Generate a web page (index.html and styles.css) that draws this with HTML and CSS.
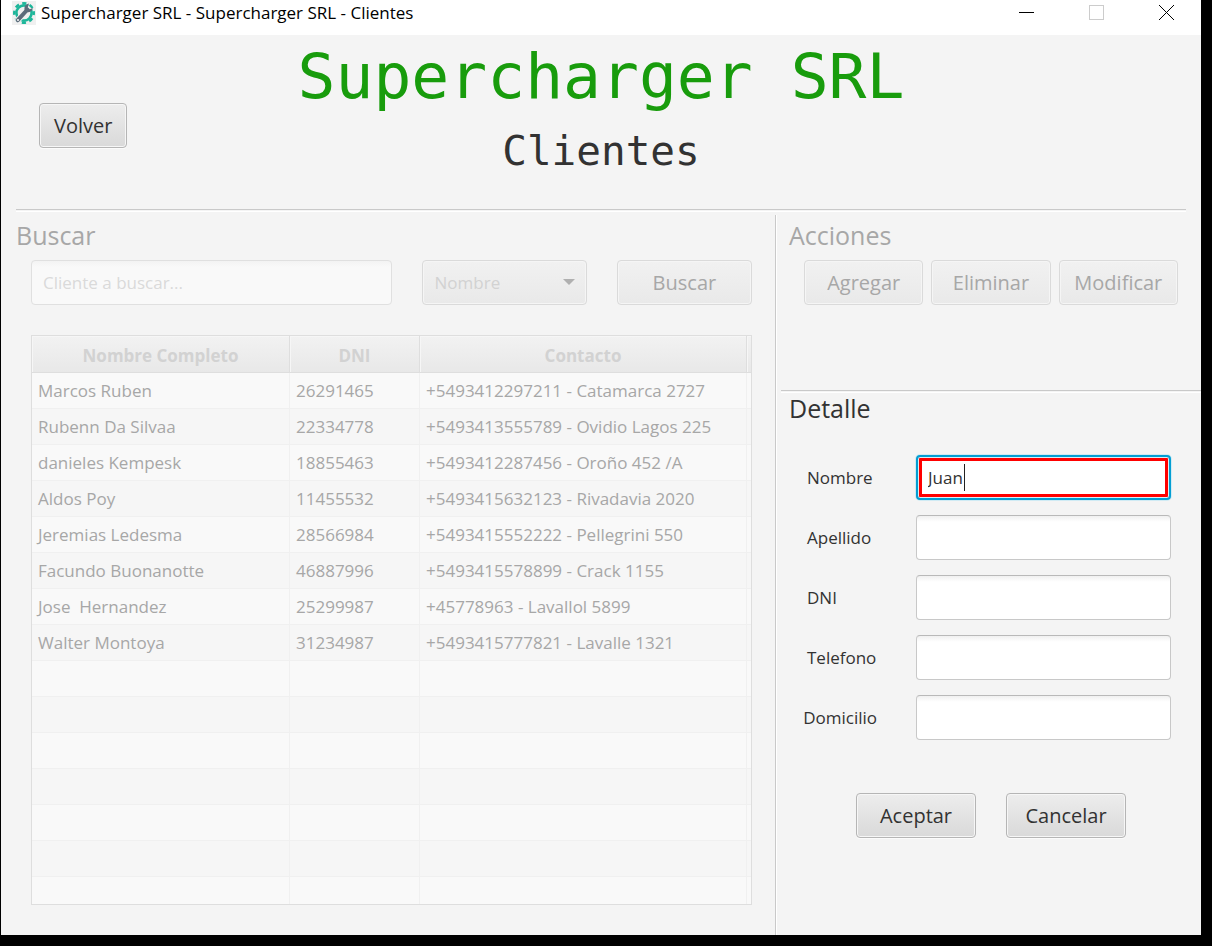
FILE: index.html
```html
<!DOCTYPE html>
<html lang="es">
<head>
<meta charset="utf-8">
<meta name="viewport" content="width=device-width, initial-scale=1">
<title>Supercharger SRL - Clientes</title>
<link rel="stylesheet" href="styles.css">
</head>
<body>
<div class="window">
  <div class="titlebar">
    <svg class="titlebar-icon" viewBox="0 0 24 24" aria-hidden="true">
      <rect width="24" height="24" fill="#f0f0f0"/>
      <circle cx="12" cy="12" r="7.6" fill="none" stroke="#1eb69a" stroke-width="2.6"/>
      <circle cx="12" cy="12" r="9.7" fill="none" stroke="#1eb69a" stroke-width="2.6" stroke-dasharray="4.2 3.418" stroke-dashoffset="2.1"/>
      <path d="M5 20 L18 6" stroke="#f0f0f0" stroke-width="6"/>
      <path d="M5.8 19.2 L15 9" stroke="#5c6b7a" stroke-width="4" stroke-linecap="round"/>
      <path d="M17 2.6 C12.8 3.2 11.6 7.2 13 9.8 C15 12.4 20 11.6 20.8 7 L17.8 8.2 L15.8 6.2 Z" fill="#5c6b7a"/>
      <circle cx="6" cy="19" r="1.1" fill="#f0f0f0"/>
    </svg>
    <span class="titlebar-text">Supercharger SRL - Supercharger SRL - Clientes</span>
    <div class="titlebar-controls">
      <button class="window-button" type="button" aria-label="Minimizar">
        <svg width="15" height="15" viewBox="0 0 15 15"><path d="M0 7.5H15" stroke="#000"/></svg>
      </button>
      <button class="window-button" type="button" aria-label="Maximizar" disabled>
        <svg width="15" height="15" viewBox="0 0 15 15"><rect x=".5" y=".5" width="14" height="14" fill="none" stroke="#ccc"/></svg>
      </button>
      <button class="window-button" type="button" aria-label="Cerrar">
        <svg width="15" height="15" viewBox="0 0 15 15"><path d="M0 0L15 15M15 0L0 15" stroke="#000"/></svg>
      </button>
    </div>
  </div>

  <header class="header">
    <div class="header-side"><button class="button" type="button">Volver</button></div>
    <div class="header-titles">
      <h1 class="brand">Supercharger SRL</h1>
      <p class="subtitle">Clientes</p>
    </div>
    <div class="header-side"></div>
  </header>
  <hr class="rule rule-header">

  <main class="content">
    <section class="search">
      <h2 class="heading heading-disabled">Buscar</h2>
      <div class="search-bar">
        <input class="text-input search-input" type="text" placeholder="Cliente a buscar..." aria-label="Cliente a buscar" disabled>
        <div class="combo">
          <select class="combo-select" aria-label="Buscar por" disabled><option>Nombre</option></select>
          <svg class="combo-arrow" width="12" height="7" viewBox="0 0 12 7" aria-hidden="true"><path d="M0 0H12L6 6Z" fill="#b0b0b0"/></svg>
        </div>
        <button class="button search-button" type="button" disabled>Buscar</button>
      </div>
      <div class="table-frame">
        <table class="table">
          <colgroup><col class="col-name"><col class="col-dni"><col><col class="col-filler"></colgroup>
          <thead><tr><th>Nombre Completo</th><th>DNI</th><th>Contacto</th><th></th></tr></thead>
          <tbody>
            <tr><td>Marcos Ruben</td><td>26291465</td><td>+5493412297211 - Catamarca 2727</td><td></td></tr>
            <tr><td>Rubenn Da Silvaa</td><td>22334778</td><td>+5493413555789 - Ovidio Lagos 225</td><td></td></tr>
            <tr><td>danieles Kempesk</td><td>18855463</td><td>+5493412287456 - Oroño 452 /A</td><td></td></tr>
            <tr><td>Aldos Poy</td><td>11455532</td><td>+5493415632123 - Rivadavia 2020</td><td></td></tr>
            <tr><td>Jeremias Ledesma</td><td>28566984</td><td>+5493415552222 - Pellegrini 550</td><td></td></tr>
            <tr><td>Facundo Buonanotte</td><td>46887996</td><td>+5493415578899 - Crack 1155</td><td></td></tr>
            <tr><td>Jose&nbsp; Hernandez</td><td>25299987</td><td>+45778963 - Lavallol 5899</td><td></td></tr>
            <tr><td>Walter Montoya</td><td>31234987</td><td>+5493415777821 - Lavalle 1321</td><td></td></tr>
            <tr><td></td><td></td><td></td><td></td></tr>
            <tr><td></td><td></td><td></td><td></td></tr>
            <tr><td></td><td></td><td></td><td></td></tr>
            <tr><td></td><td></td><td></td><td></td></tr>
            <tr><td></td><td></td><td></td><td></td></tr>
            <tr><td></td><td></td><td></td><td></td></tr>
            <tr><td></td><td></td><td></td><td></td></tr>
          </tbody>
        </table>
      </div>
    </section>

    <div class="side">
      <section class="actions">
        <h2 class="heading heading-disabled">Acciones</h2>
        <div class="actions-row">
          <button class="button" type="button" disabled>Agregar</button>
          <button class="button" type="button" disabled>Eliminar</button>
          <button class="button" type="button" disabled>Modificar</button>
        </div>
      </section>
      <hr class="rule rule-side">
      <section class="detail">
        <h2 class="heading">Detalle</h2>
        <form class="form">
          <div class="fields">
            <label class="label" for="nombre">Nombre</label>
            <div class="caret-field">
              <input class="text-input text-input-error" id="nombre" type="text" value="Juan">
              <span class="caret"></span>
            </div>
            <label class="label" for="apellido">Apellido</label>
            <input class="text-input" id="apellido" type="text">
            <label class="label" for="dni">DNI</label>
            <input class="text-input" id="dni" type="text">
            <label class="label" for="telefono">Telefono</label>
            <input class="text-input" id="telefono" type="text">
            <label class="label" for="domicilio">Domicilio</label>
            <input class="text-input" id="domicilio" type="text">
          </div>
          <div class="form-buttons">
            <button class="button form-button" type="button">Aceptar</button>
            <button class="button form-button" type="button">Cancelar</button>
          </div>
        </form>
      </section>
    </div>
  </main>
</div>
</body>
</html>
```
FILE: styles.css
```css
* {
  box-sizing: border-box;
}

body {
  margin: 0;
  height: 100vh;
  min-height: 860px;
  padding: 0 11px 11px 1px;
  background: #000;
  color: #323232;
  font: 17px/24px "Open Sans", "Noto Sans", sans-serif;
}

button,
input,
select {
  font: inherit;
  color: inherit;
}

.window {
  display: flex;
  flex-direction: column;
  height: 100%;
  background: #f4f4f4;
}

/* Title bar */
.titlebar {
  display: flex;
  align-items: center;
  height: 35px;
  padding: 0 0 10px 11px;
  background: #fff;
  color: #000;
}

.titlebar-icon {
  width: 24px;
  height: 24px;
  margin-right: 5px;
}

.titlebar-controls {
  display: flex;
  margin-left: auto;
}

.window-button {
  display: flex;
  align-items: center;
  justify-content: center;
  width: 70px;
  height: 25px;
  padding: 0;
  border: 0;
  background: none;
}

/* Header */
.header {
  display: grid;
  grid-template-columns: 1fr auto 1fr;
  padding: 4px 0 22px;
}

.header-side {
  padding: 64px 0 0 38px;
}

.header-titles {
  text-align: center;
  font-family: "DejaVu Sans Mono", monospace;
}

.brand {
  margin: 0;
  color: #189c0c;
  font-size: 63px;
  font-weight: 400;
  line-height: 76px;
}

.subtitle {
  margin: 0;
  font-size: 41px;
  line-height: 72px;
}

.rule {
  flex: none;
  height: 3px;
  margin: 0;
  border: 0;
  border-top: 1px solid #c9c9c9;
  border-bottom: 1px solid #fff;
}

.rule-header {
  margin: 0 15px;
}

/* Controls */
.button {
  height: 45px;
  padding: 0 14px;
  border: 1px solid #b5b5b5;
  border-radius: 4px;
  background: linear-gradient(#ededed, #d9d9d9);
  box-shadow: inset 0 0 0 1px #f6f6f6, 0 1px 0 #fbfbfb;
  font-size: 20px;
  line-height: 24px;
}

.button:disabled {
  border-color: #dadada;
  background: linear-gradient(#f1f1f1, #e9e9e9);
  box-shadow: inset 0 0 0 1px #f5f5f5;
  color: #a7a7a7;
}

.text-input {
  width: 100%;
  min-width: 0;
  height: 45px;
  padding: 0 11px;
  border: 1px solid #c8c8c8;
  border-top-color: #b9b9b9;
  border-radius: 4px;
  background: linear-gradient(#f0f0f0, #fff 6px);
}

.text-input:disabled {
  border-color: #e0e0e0;
  background: linear-gradient(#f3f3f3, #f9f9f9 6px);
}

.text-input::placeholder {
  color: #dadada;
  opacity: 1;
}

.text-input-error {
  padding: 0 10px;
  border: 2px solid #039ed3;
  background: #fff;
  box-shadow: 0 0 0 1px #d0ebf4, inset 0 0 0 1px #d9eef6, inset 0 0 0 4px #f00;
  outline: 0;
  caret-color: transparent;
}

.caret-field {
  position: relative;
}

.caret {
  position: absolute;
  top: 9px;
  left: 48px;
  width: 1px;
  height: 27px;
  background: #222;
}

/* Layout */
.content {
  display: grid;
  flex: 1;
  grid-template-columns: 129fr 71fr;
  min-height: 0;
  padding-top: 3px;
}

.heading {
  margin: 0;
  font-size: 25px;
  font-weight: 400;
  line-height: 34px;
}

.heading-disabled {
  color: #a7a7a7;
}

/* Search */
.search {
  display: flex;
  flex-direction: column;
  min-height: 0;
  padding: 3px 23px 30px 15px;
}

.search-bar {
  display: grid;
  grid-template-columns: 72fr 33fr 27fr;
  gap: 30px;
  margin: 8px 0 30px 15px;
}

.combo {
  position: relative;
}

.combo-select {
  width: 100%;
  height: 45px;
  padding: 0 12px;
  appearance: none;
  border: 1px solid #dadada;
  border-radius: 4px;
  background: linear-gradient(#f1f1f1, #e9e9e9);
  box-shadow: inset 0 0 0 1px #f5f5f5;
  color: #d2d2d2;
  opacity: 1;
}

.combo-arrow {
  position: absolute;
  top: 19px;
  right: 12px;
}

.table-frame {
  flex: 1;
  min-height: 0;
  margin-left: 15px;
  overflow: hidden;
  border: 1px solid #dedede;
}

.table {
  width: 100%;
  table-layout: fixed;
  border-collapse: separate;
  border-spacing: 0;
  color: #a7a7a7;
}

.col-name {
  width: 258px;
}

.col-dni {
  width: 130px;
}

.col-filler {
  width: 4px;
}

.table th {
  height: 37px;
  padding: 3px 0 0;
  border-right: 1px solid #dedede;
  border-bottom: 1px solid #dedede;
  background: linear-gradient(#f2f2f2, #e8e8e8);
  box-shadow: inset 1px 1px 0 #f6f6f6;
  color: #d2d2d2;
}

.table td {
  height: 36px;
  padding: 0 6px;
  border-right: 1px solid #f0f0f0;
  border-bottom: 1px solid #f0f0f0;
  white-space: nowrap;
}

.table th:last-child,
.table td:last-child {
  padding: 0;
  border-right: 0;
}

.table tr:nth-child(odd) td {
  background: #f9f9f9;
}

.table tr:nth-child(even) td {
  background: #f6f6f6;
}

/* Right side */
.side {
  display: flex;
  flex-direction: column;
  border-left: 1px solid #c9c9c9;
  box-shadow: inset 1px 0 0 #fff;
}

.actions {
  padding: 3px 23px 85px 13px;
}

.actions-row {
  display: grid;
  grid-template-columns: repeat(3, 1fr);
  gap: 8px;
  margin: 8px 0 0 15px;
}

.actions-row .button {
  padding: 0;
}

.rule-side {
  margin-left: 5px;
}

.detail {
  padding: 0 30px 0 13px;
}

.detail .heading {
  line-height: 30px;
}

.fields {
  display: grid;
  grid-template-columns: 88px 1fr;
  gap: 15px 39px;
  align-items: center;
  margin-top: 32px;
}

.label {
  justify-self: end;
  min-width: 70px;
}

.form-buttons {
  display: flex;
  justify-content: center;
  gap: 30px;
  margin: 53px 0 0 22px;
}

.form-button {
  width: 120px;
}
```
